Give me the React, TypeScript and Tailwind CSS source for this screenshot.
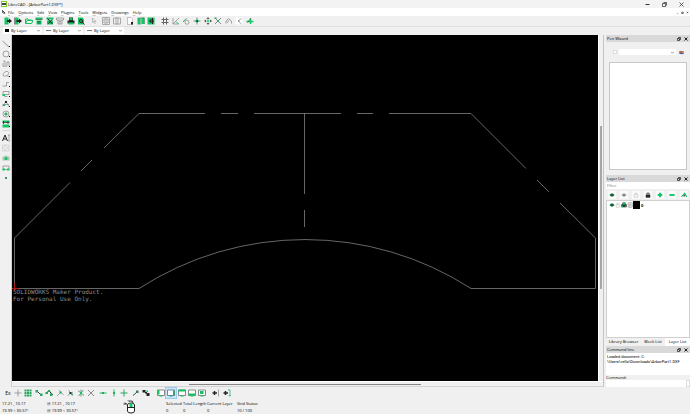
import React, { useState } from 'react';

const G = '#12c463';
const D = '#222222';
const M = '#8a8a8a';

type Shape = { d: string; s?: string; f?: string; w?: number };

// all glyphs are drawn on a 16 x 16 grid
const icons: Record<string, Shape[]> = {
  newDoc: [{ d: 'M1 1h8v14H1z', f: G }, { d: 'M6 6h4V3l6 5-6 5v-3H6z', f: D }],
  newTpl: [{ d: 'M2 1h7v14H2z', f: G }, { d: 'M5 6h5V3l6 5-6 5v-3H5z', f: D }, { d: 'M1 1v14', s: D }],
  open: [{ d: 'M1 13V4h5l1 2h6v2M1 13l3-6h12l-3 6z', s: G, w: 2 }],
  save: [{ d: 'M1 1h14v4H1zM3 7h10v8H3z', f: G }, { d: 'M1 5h14M5 9h6M5 12h6', s: D }],
  saveAs: [{ d: 'M1 1h14v4H1zM2 7h12v8H2z', f: G }, { d: 'M3 3l10 11M12 5l-7 8', s: D, w: 2 }],
  exportDoc: [{ d: 'M1 2h14v4H1zM4 6v8h8V6M6 9h4M8 9v5', s: M, w: 1.5 }],
  print: [{ d: 'M4 1h8v6h3v6H1V7h3z', f: D }, { d: 'M5 2h6v4H5zM3 11h10v4H3z', f: G }],
  preview: [{ d: 'M2 1h9l3 4v10H2z', f: G }, { d: 'M5 8a3 3 0 1 0 6 0a3 3 0 1 0-6 0M10 10l5 5', s: D, w: 2 }],
  cursor: [{ d: 'M5 2l7 7H8l3 5M5 2v9l3-2', s: M }],
  cut: [{ d: 'M1 1h14v14H1zM4 4h8v8H4zM8 4v8', s: '#aaaaaa', w: 2 }],
  copy: [{ d: 'M1 2h9v12H1zM6 2h9v12H6z', s: '#aaaaaa', w: 2 }],
  paste: [{ d: 'M3 1h7l3 3v11H3z', s: M, f: '#ffffff' }, { d: 'M10 10h4v5h-4z', f: D }],
  columns: [{ d: 'M1 2h6v13H1zM9 1h6v13H9z', f: G }, { d: 'M8 1v14M1 2h14v12', s: '#557766' }],
  columnsIn: [{ d: 'M1 1h14v14H1z', f: G }, { d: 'M14 8H5M9 4L5 8l4 4M11 2v12', s: D, w: 2 }],
  grid: [{ d: 'M5 1v14M11 1v14M1 5h14M1 11h14', s: '#666666', w: 2 }],
  draft: [{ d: 'M2 14L14 2M2 2v12h12', s: M, w: 1.5 }, { d: 'M8 9l5 5', s: G, w: 2 }],
  redraw: [{ d: 'M6 11a4 4 0 1 0 8-1a4 4 0 1 0-8 1M2 9l8-7', s: M, w: 1.5 }, { d: 'M2 10l5-5', s: G, w: 2 }],
  zoomIn: [{ d: 'M8 1v14M1 8h14', s: M, w: 2 }, { d: 'M8 4l4 4-4 4-4-4z', f: G }, { d: 'M7 7h3v3H7z', f: D }],
  zoomOut: [{ d: 'M8 0l3 4H5zM8 16l3-4H5zM0 8l4-3v6zM16 8l-4-3v6z', f: '#555555' }, { d: 'M5 8h6M8 5v6', s: G, w: 2 }],
  zoomAuto: [{ d: 'M2 2l12 12M14 2L2 14', s: '#666666', w: 1.5 }, { d: 'M6 6h4v4H6zM1 1h4v3H1z', f: '#3b9c68' }],
  zoomPrev: [{ d: 'M2 13V8l5-5 6 5v5M4 12l5-7', s: M, w: 1.5 }],
  zoomWin: [{ d: 'M1 1h14v14H1z', f: '#ffffff' }, { d: 'M13 3L6 8l7 6M6 8h4', s: M, w: 1.5 }],
  pan: [{ d: 'M1 9h14M9 3v11', s: G, w: 3 }, { d: 'M3 11L10 2', s: D }],
  line: [{ d: 'M1 2l13 12', s: '#777777', w: 1.5 }],
  circle: [{ d: 'M2 8a6 6 0 1 0 12 0a6 6 0 1 0-12 0', s: M, w: 1.5 }],
  curve: [{ d: 'M2 2h4v9a2 2 0 0 0 4 0V4h4v8M2 6v7h3', s: M, w: 1.5 }],
  ellipse: [{ d: 'M2 10c0-4 5-8 9-7s3 6-1 8-8 2-8-1zM10 11l4 3', s: M, w: 1.5 }],
  polyline: [{ d: 'M1 12h8V5h5', s: M, w: 1.5 }],
  select: [{ d: 'M2 3h12v6H2zM5 9v4h6', s: M, w: 1.5 }, { d: 'M1 8h5v4H1z', f: G }],
  dimension: [{ d: 'M1 13l7-10 6 10M1 9h13', s: M, w: 1.5 }, { d: 'M6 2h4v4H6z', f: D }, { d: 'M2 9h4v3H2z', f: '#27a85f' }],
  modify: [{ d: 'M2 8a6 6 0 1 0 12 0a6 6 0 1 0-12 0', s: M, w: 1.5 }, { d: 'M8 5v6M5 8h6', s: '#27a85f', w: 3 }],
  measure: [{ d: 'M1 9h14v6H1zM1 1h14v3H1z', f: G }, { d: 'M1 5h14M3 8V2M12 8V2', s: D, w: 1.5 }],
  text: [{ d: 'M1 14L6 2l5 12M3 10h6', s: D, w: 2 }, { d: 'M14 2v12M12 2h4M12 14h4', s: '#666666' }],
  hatch: [{ d: 'M1 2h13v12H1zM1 6l8 8M5 2l9 9M14 4L4 14M8 2L1 9', s: '#c2c2c2' }],
  image: [{ d: 'M1 5h4l1-2h4l1 2h4v8H1z', f: '#a9c9b8' }, { d: 'M5 9a3 3 0 1 0 6 0a3 3 0 1 0-6 0', f: G }],
  block: [{ d: 'M2 10V4h12v7H2z', s: M, w: 1.5 }, { d: 'M1 9h5v4H1zM10 9h5v4h-5z', f: G }],
  point: [{ d: 'M6 6h4v4H6z', f: '#2f9d62' }],
  cross: [{ d: 'M8 1v14M1 8h14', s: M, w: 1.5 }],
  dots: [{ d: 'M1 1h4v4H1zM6 1h4v4H6zM11 1h4v4h-4zM1 6h4v4H1zM6 6h4v4H6zM11 6h4v4h-4zM1 11h4v4H1zM6 11h4v4H6zM11 11h4v4h-4z', f: '#27a85f' }],
  snapEnd: [{ d: 'M4 4l8 8', s: '#444444', w: 2 }, { d: 'M1 2h5v5H1zM10 9h5v5h-5z', f: '#27a85f' }],
  snapOn: [{ d: 'M2 9l6-6 7 9', s: D, w: 2 }, { d: 'M1 6h5v4H1zM6 2h4v4H6zM10 9h5v5h-5z', f: '#27a85f' }],
  snapMid: [{ d: 'M2 14L9 7M6 2l9 10', s: M, w: 1.5 }, { d: 'M7 5h4v4H7z', f: '#27a85f' }],
  snapCen: [{ d: 'M3 13L14 6M5 2l8 12', s: M, w: 1.5 }, { d: 'M7 6h4v4H7z', f: D }, { d: 'M11 9h3v3h-3z', f: G }],
  snapInt: [{ d: 'M2 3l12 10M13 2L3 14M8 1v14', s: '#3b7c58', w: 1.5 }, { d: 'M6 6h4v4H6z', f: G }],
  x: [{ d: 'M2 2l12 12M14 2L2 14', s: '#666666', w: 1.5 }],
  horiz: [{ d: 'M1 8h14', s: G, w: 2 }, { d: 'M6 6h4v4H6z', f: '#27a85f' }],
  vert: [{ d: 'M8 1v14', s: G, w: 2 }, { d: 'M6 6h4v4H6z', f: '#27a85f' }],
  ortho: [{ d: 'M8 1v14M1 8h14', s: '#27a85f', w: 2 }],
  relZero: [{ d: 'M2 13l7-6', s: '#444444', w: 2 }, { d: 'M8 3h5v5H8z', f: '#3b7c58' }],
  lockZero: [{ d: 'M1 2h6v5H1zM6 6h4v3H6zM9 8h6v6H9z', f: D }, { d: 'M9 3h3v3H9z', f: G }],
  dockLeft: [{ d: 'M1 2h14v11H1z', s: '#666666', f: '#ffffff', w: 1.5 }, { d: 'M1 2h4v9H1zM5 13h6v2H5z', f: G }],
  dockRight: [{ d: 'M1 2h14v11H1z', s: '#446688', f: '#ffffff', w: 1.5 }, { d: 'M12 3h3v10h-3zM5 13h6v2H5z', f: '#27a85f' }],
  dockTop: [{ d: 'M1 2h14v11H1z', s: '#666666', f: '#ffffff', w: 1.5 }, { d: 'M1 1h14v4H1zM5 13h6v2H5z', f: G }],
  dockBottom: [{ d: 'M1 2h14v11H1z', s: '#666666', f: '#ffffff', w: 1.5 }, { d: 'M1 9h14v4H1zM5 13h6v2H5z', f: G }],
  dockFloat: [{ d: 'M1 2h14v11H1z', s: '#666666', f: '#ffffff', w: 1.5 }, { d: 'M4 4h7v6H4zM5 13h6v2H5z', f: G }],
  addBar: [{ d: 'M1 8h9M5 4v8', s: D, w: 3 }, { d: 'M13 1v14', s: M, w: 1.5 }],
  addMenu: [{ d: 'M1 8h9M5 4v8', s: D, w: 3 }, { d: 'M14 1v14M10 2h4M11 13h4', s: '#5bb985', w: 2 }],
  eye: [{ d: 'M1 8q7-9 14 0q-7 9-14 0z', f: '#1d7a47' }, { d: 'M6 7h4v3H6z', f: D }],
  eyeOff: [{ d: 'M1 8q7-9 14 0q-7 9-14 0z', f: '#a5a5a5' }, { d: 'M6 7h4v3H6z', f: '#555555' }],
  unlock: [{ d: 'M3 7h10v7H3zM5 7V3h5v3', s: '#bbbbbb', w: 1.5 }],
  lock: [{ d: 'M2 7h12v8H2z', f: D }, { d: 'M5 7V3h6v4', s: D, w: 2 }],
  plus: [{ d: 'M8 2v12M2 8h12', s: G, w: 5 }],
  minus: [{ d: 'M1 8h14', s: G, w: 5 }],
  edit: [{ d: 'M1 13L10 3l5 10', s: G, w: 3 }, { d: 'M7 7h3v5H7z', f: D }],
  printSmall: [{ d: 'M4 1h8v5h3v8H1V6h3z', f: D }, { d: 'M5 2h6v5H5zM3 9h3v5H3zM10 9h3v5h-3z', f: G }],
  construct: [{ d: 'M3 2h11v12H3zM3 8h11M8 2v12', s: M, w: 1.5 }],
  palette: [{ d: 'M1 3h5v10H1z', f: '#d9442f' }, { d: 'M6 3h5v10H6z', f: '#1faa45' }, { d: 'M11 3h4v6h-4z', f: '#d9442f' }, { d: 'M4 10h11v3H4z', f: '#2456b8' }],
};

function Icon({ name, big }: { name: string; big?: boolean }) {
  return (
    <svg viewBox="0 0 16 16" aria-hidden="true" className={big ? 'size-2 shrink-0' : 'size-[6px] shrink-0'}>
      {icons[name].map((p, i) => (
        <path key={i} d={p.d} fill={p.f ?? 'none'} stroke={p.s ?? 'none'} strokeWidth={p.w ?? 1} />
      ))}
    </svg>
  );
}

function ToolGroup({ names, className }: { names: string[]; className: string }) {
  return (
    <div className={`flex shrink-0 justify-between ${className}`}>
      {names.map((name) => (
        <button
          key={name}
          type="button"
          aria-label={name}
          className={`flex h-[10px] w-[10px] items-center justify-center ${name === 'dockRight' ? 'bg-[#cce4f7] outline outline-[#9ccbf0]' : ''}`}
        >
          <Icon name={name} big />
        </button>
      ))}
    </div>
  );
}

function Chevron() {
  return (
    <svg viewBox="0 0 8 8" aria-hidden="true" className="mr-[2px] size-[3px] shrink-0">
      <path d="M0 2l4 4 4-4" fill="none" stroke="#777777" strokeWidth="2" />
    </svg>
  );
}

function PenSelect({ label, swatch }: { label: string; swatch: string }) {
  return (
    <div className="flex h-[7px] w-[39px] items-center bg-white pl-[2px]">
      <span className={swatch} />
      <select aria-label={label} className="h-[7px] min-w-0 flex-1 appearance-none pl-[2px] leading-[6px]">
        <option>By Layer</option>
      </select>
      <Chevron />
    </div>
  );
}

function DockTitle({ title }: { title: string }) {
  return (
    <div className="flex h-[7px] shrink-0 items-center bg-[#d9d9d9] pl-px">
      <h2 className="flex-1">{title}</h2>
      <button type="button" aria-label={`Float ${title}`} className="mr-[3px]">
        <svg viewBox="0 0 8 8" className="size-1">
          <path d="M1 3h4v4H1zM3 3V1h4v4H5" fill="none" stroke="#222222" strokeWidth="1.5" />
        </svg>
      </button>
      <button type="button" aria-label={`Close ${title}`} className="mr-[2px]">
        <svg viewBox="0 0 8 8" className="size-1">
          <path d="M1 1l6 6M7 1L1 7" stroke="#222222" strokeWidth="2" />
        </svg>
      </button>
    </div>
  );
}

function Drawing() {
  return (
    <svg viewBox="12 35 586 346" className="block h-full w-full" role="img" aria-label="ArborPart1 drawing">
      <g fill="none" stroke="#808080" strokeWidth="0.8">
        <path d="M139 113.5H205M221 113.5h17M254 113.5h87M357 113.5h16M389 113.5h82" />
        <path d="M304.5 113v81M304.5 210v17" />
        <path d="M139 113.5L104 148M92 160l-11 11M70 182.5L14.5 238v50.5H139" />
        <path d="M471 113.5l55 55M537 180l12 12M560 203l35.5 35v50.5H471" />
        <path d="M139 288.5A306 306 0 0 1 471 288.5" />
      </g>
      <path d="M14.5 283v8M12 288.5h7" stroke="#b01818" strokeWidth="1" />
      <g fill="#8c8c8c" className="font-['DejaVu_Sans_Mono',monospace] text-[6px] font-normal">
        <text x="13" y="294">SOLIDWORKS Maker Product.</text>
        <text x="13" y="301">For Personal Use Only.</text>
      </g>
    </svg>
  );
}

function Readout({ label, value, className }: { label: string; value: string; className: string }) {
  return (
    <div className={`shrink-0 whitespace-nowrap ${className}`}>
      <div>{label}</div>
      <div>{value}</div>
    </div>
  );
}

const menus = ['File', 'Options', 'Edit', 'View', 'Plugins', 'Tools', 'Widgets', 'Drawings', 'Help'];

export default function App() {
  const [command, setCommand] = useState('');

  return (
    <div className="flex h-screen flex-col overflow-hidden bg-[#f0f0f0] font-['Open_Sans','Noto_Sans',sans-serif] text-[4px] leading-[7px] font-medium text-black">
      <header className="flex h-2 shrink-0 items-center bg-[#f3f3f3]">
        <span className="ml-px flex size-[6px] items-center justify-center border border-[#7ccf26] bg-white">
          <span className="h-[2px] w-1 bg-[#444444]" />
        </span>
        <h1 className="ml-px flex-1">LibreCAD - [ArborPart1.DXF*]</h1>
        <div className="mr-[6px] flex w-[39px] justify-between">
          <button type="button" aria-label="Minimize">
            <svg viewBox="0 0 10 10" className="size-[5px]"><path d="M1 5h8" stroke="#333" strokeWidth="2" /></svg>
          </button>
          <button type="button" aria-label="Restore">
            <svg viewBox="0 0 10 10" className="size-[5px]"><path d="M1 3h6v6H1zM3 1h6v6" fill="none" stroke="#333" strokeWidth="1.5" /></svg>
          </button>
          <button type="button" aria-label="Close">
            <svg viewBox="0 0 10 10" className="size-[5px]"><path d="M1 1l8 8M9 1L1 9" stroke="#333" strokeWidth="1.5" /></svg>
          </button>
        </div>
      </header>

      <nav className="flex h-2 shrink-0 items-center bg-white pl-[2px]">
        <svg viewBox="0 0 10 10" aria-hidden="true" className="size-1"><path d="M1 1l7 7M1 1v5l6 3" stroke="#222" strokeWidth="2" fill="none" /></svg>
        <div className="ml-[2px] flex flex-1 gap-1">
          {menus.map((m) => (
            <button key={m} type="button"><span className="underline decoration-[#cccccc]">{m[0]}</span>{m.slice(1)}</button>
          ))}
        </div>
        <div className="mr-px flex gap-[2px]">
          {['M2 8h4', 'M2 3h4v4H2z', 'M2 2l4 4M6 2L2 6'].map((d, i) => (
            <button key={d} type="button" aria-label={['Minimize drawing', 'Restore drawing', 'Close drawing'][i]}>
              <svg viewBox="0 0 8 8" className="size-[3px]"><path d={d} fill="none" stroke="#444444" strokeWidth="2" /></svg>
            </button>
          ))}
        </div>
      </nav>

      <div className="flex h-[11px] shrink-0 items-center border-b border-[#e0e0e0] pl-[3px]">
        <ToolGroup className="w-[83px]" names={['newDoc', 'newTpl', 'open', 'save', 'saveAs', 'exportDoc', 'print', 'preview']} />
        <ToolGroup className="ml-[3px] w-[33px]" names={['cursor', 'cut', 'copy']} />
        <ToolGroup className="ml-[3px] w-[31px]" names={['paste', 'columns', 'columnsIn']} />
        <ToolGroup className="ml-1 w-[95px]" names={['grid', 'draft', 'redraw', 'zoomIn', 'zoomOut', 'zoomAuto', 'zoomPrev', 'zoomWin', 'pan']} />
      </div>

      <div className="flex h-2 shrink-0 items-start gap-[2px] pl-[3px]">
        <PenSelect label="Color" swatch="h-[3px] w-1 bg-black" />
        <PenSelect label="Width" swatch="h-px w-[5px] bg-[#777777]" />
        <PenSelect label="Line type" swatch="h-px w-[5px] bg-[#777777]" />
      </div>

      <div className="flex min-h-0 flex-1">
        <div className="flex w-3 shrink-0 flex-col items-center border-r border-[#cccccc] pt-[3px]">
          {['line', 'circle', 'curve', 'ellipse', 'polyline', 'select', 'dimension', 'modify', 'measure'].map((n) => (
            <button key={n} type="button" aria-label={n} className="flex h-[10px] items-end">
              <Icon name={n} big />
              <span className="-ml-px mb-px size-px bg-black" />
            </button>
          ))}
          <div className="my-[2px] h-px w-2 shrink-0 bg-[#d8d8d8]" />
          {['text', 'hatch', 'image', 'block', 'point'].map((n) => (
            <button key={n} type="button" aria-label={n} className="flex h-[10px] items-center">
              <Icon name={n} big />
            </button>
          ))}
        </div>

        <main className="flex min-w-0 flex-1 flex-col">
          <div className="flex min-h-0 flex-1">
            <div className="min-w-0 flex-1 bg-black"><Drawing /></div>
            <div className="flex w-[5px] shrink-0 flex-col items-center border-l border-white pt-[91px]">
              <div className="h-[163px] w-[2px] bg-[#a6a6a6]" />
            </div>
          </div>
          <div className="flex h-[6px] shrink-0 items-center border-y border-t-white border-b-[#d4d4d4] pl-[30%]">
            <div className="h-px w-[56%] bg-[#858585]" />
          </div>
        </main>

        <aside className="flex w-[87px] shrink-0 flex-col border-l border-[#c4c4c4] pl-[2px]">
          <DockTitle title="Pen Wizard" />
          <div className="flex h-5 shrink-0 items-center pl-1">
            <input type="checkbox" aria-label="Use pen" className="ml-[3px] size-1 appearance-none border border-[#dddddd] bg-white" />
            <div className="ml-[2px] flex h-[6px] flex-1 items-center bg-white">
              <select aria-label="Pen color" className="h-[6px] min-w-0 flex-1 appearance-none"><option></option></select>
              <Chevron />
            </div>
            <button type="button" aria-label="Pick color" className="mr-[6px] ml-[3px]">
              <svg viewBox="0 0 16 16" className="size-[5px]">
                {icons.palette.map((p) => <path key={p.d} d={p.d} fill={p.f} />)}
              </svg>
            </button>
          </div>
          <div className="mx-[3px] min-h-0 flex-1 border border-[#c8c8c8] bg-white" />

          <div className="mt-[5px]"><DockTitle title="Layer List" /></div>
          <input aria-label="Filter" placeholder="Filter" className="h-[7px] shrink-0 bg-white pl-px placeholder:text-[#777777]" />
          <div className="flex h-[11px] shrink-0 items-center justify-between px-[2px]">
            {['eye', 'eyeOff', 'unlock', 'lock', 'plus', 'minus', 'edit'].map((n) => (
              <button key={n} type="button" aria-label={n} className="flex size-2 items-center justify-center bg-[#fafafa]"><Icon name={n} /></button>
            ))}
          </div>
          <div className="h-[138px] shrink-0 border border-[#d0d0d0] bg-white">
            <div className="flex h-2 items-center pl-[2px]">
              <Icon name="eye" /><Icon name="unlock" /><Icon name="printSmall" /><Icon name="construct" />
              <span className="mr-px h-2 w-[7px] bg-black" />
              <span className="font-bold">0</span>
            </div>
          </div>
          <div className="flex h-2 shrink-0 items-start">
            <button type="button" className="w-[35px]">Library Browser</button>
            <button type="button" className="w-6">Block List</button>
            <button type="button" className="flex flex-1 justify-center self-stretch bg-white">Layer List</button>
          </div>

          <DockTitle title="Command line" />
          <div className="h-[22px] shrink-0 bg-white pt-px pl-px font-['Roboto',sans-serif] leading-[5px] font-normal whitespace-nowrap">
            <p>Loaded document: C:</p>
            <p>\Users\vella\Downloads\ArborPart1.DXF</p>
          </div>
          <label htmlFor="command" className="h-[5px] shrink-0 leading-[5px]">Command:</label>
          <div className="flex h-[7px] shrink-0 bg-white">
            <input id="command" value={command} onChange={(e) => setCommand(e.target.value)} className="min-w-0 flex-1" />
            <button type="button" aria-label="Command options" className="w-1 border border-[#dddddd]" />
          </div>
        </aside>
      </div>

      <div className="flex h-3 shrink-0 items-center pl-[3px]">
        <button type="button" className="w-[10px] text-[5px]">Ex</button>
        <ToolGroup className="w-[83px]" names={['cross', 'dots', 'snapEnd', 'snapOn', 'snapMid', 'snapCen', 'snapInt', 'x']} />
        <ToolGroup className="ml-[2px] w-[31px]" names={['horiz', 'vert', 'ortho']} />
        <ToolGroup className="ml-[2px] w-5" names={['relZero', 'lockZero']} />
        <ToolGroup className="ml-[5px] w-[51px]" names={['dockLeft', 'dockRight', 'dockTop', 'dockBottom', 'dockFloat']} />
        <ToolGroup className="ml-1 w-[21px]" names={['addBar', 'addMenu']} />
      </div>

      <footer className="flex h-[15px] shrink-0 items-start pt-px pl-[2px]">
        <Readout className="w-[45px]" label="17.21 , 10.17" value="19.99 < 30.57°" />
        <Readout className="w-[75px]" label="@  17.21 , 10.17" value="@  19.99 < 30.57°" />
        <svg viewBox="0 0 26 28" aria-hidden="true" className="ml-px h-[14px] w-[13px] shrink-0">
          <path d="M9 10q0-4 7-4t7 4v12q0 4-7 4t-7-4zM9 15h14M20 6q0-5-5-4t-5-1M1 8h6M4 5l4 4" fill="#ffffff" stroke="#222222" strokeWidth="2" />
          <path d="M13 7h6v7h-6z" fill={G} />
        </svg>
        <Readout className="ml-[30px] w-[17px]" label="Selected" value="0" />
        <Readout className="w-6" label="Total Length" value="0" />
        <Readout className="w-[30px]" label="Current Layer" value="0" />
        <Readout className="" label="Grid Status" value="10 / 100" />
      </footer>
    </div>
  );
}
